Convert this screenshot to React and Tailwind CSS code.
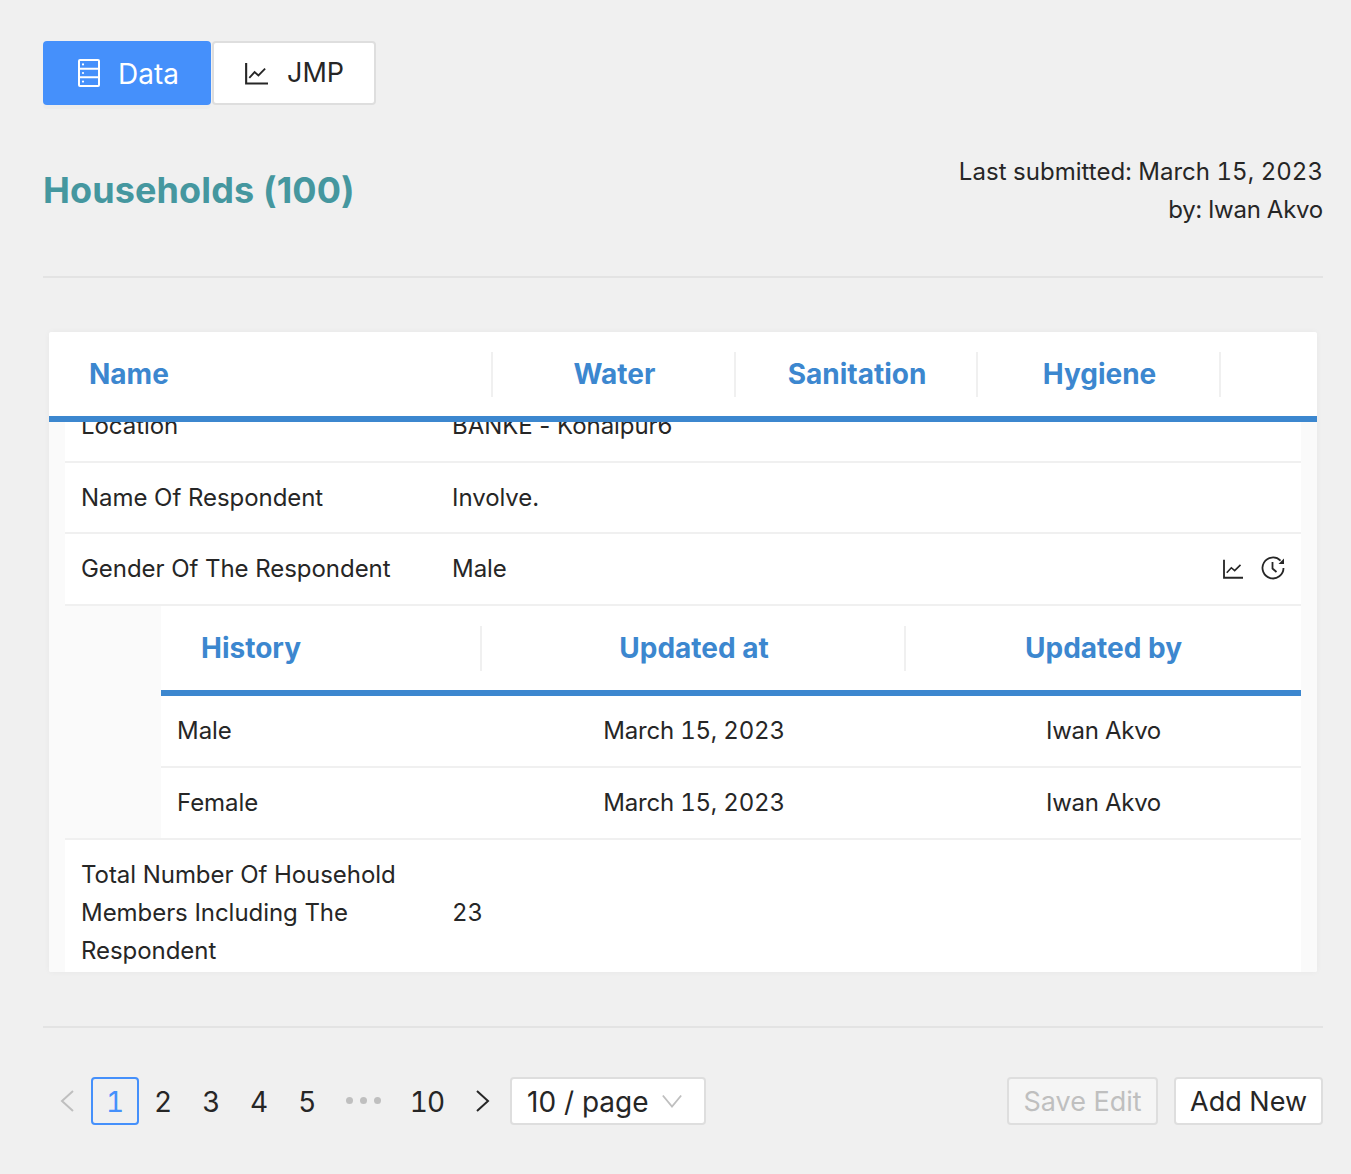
import React from "react";

const ChartIcon = ({ className }) => (
  <svg viewBox="0 0 24 24" fill="none" stroke="currentColor" strokeWidth="2.2" className={className}>
    <path d="M1.2 1v21.5H24" />
    <path d="M4.5 16.5l5.5-6 4 3.5 7-7" strokeWidth="1.9" />
  </svg>
);

const ServerIcon = ({ className }) => (
  <svg viewBox="0 0 22 28" fill="none" stroke="currentColor" strokeWidth="2" className={className}>
    <rect x="1" y="1" width="20" height="26" rx="1" />
    <path d="M1 9.7h20M1 18.3h20" />
    <circle cx="5" cy="5.4" r="1.1" fill="currentColor" stroke="none" />
    <circle cx="5" cy="14" r="1.1" fill="currentColor" stroke="none" />
    <circle cx="5" cy="22.6" r="1.1" fill="currentColor" stroke="none" />
  </svg>
);

const HistoryIcon = ({ className }) => (
  <svg viewBox="0 0 24 24" fill="none" stroke="currentColor" strokeWidth="1.8" className={className}>
    <path d="M22.5 12A10.5 10.5 0 1 1 19.5 4.6" />
    <path d="M23 2.5v5.5h-5.5z" fill="currentColor" stroke="none" />
    <path d="M11.5 6v6.5l4 3.5" />
  </svg>
);

const Cell = ({ label, value, children }) => (
  <div className="flex h-full items-center border-b-2 border-[#f0f0f0] pl-4 pr-4">
    <div className="w-[371px] shrink-0 pr-4">{label}</div>
    <div className="flex-1">{value}</div>
    {children}
  </div>
);

const HeadCell = ({ className, children, divider = true }) => (
  <div className={`relative flex h-full items-center ${className}`}>
    {children}
    {divider && <span className="absolute right-0 top-[20px] h-[45px] w-[2px] bg-[#f0f0f0]" />}
  </div>
);

export default function App() {
  return (
    <div className="h-[1174px] bg-[#f0f0f0] pl-[43px] pr-[28px] pt-[41px] font-['Inter',sans-serif] text-[24px] tracking-normal text-[#262626]">
      <div className="flex h-[64px]">
        <div className="flex w-[168px] items-center justify-center gap-[18px] rounded-[4px] bg-[#4590fb] pl-[3px] text-[28px] text-white shadow-[0_4px_0_rgba(0,0,0,0.015)]">
          <ServerIcon className="h-[28px] w-[22px]" />
          <span className="mt-px">Data</span>
        </div>
        <div className="ml-px flex w-[164px] items-center justify-center gap-[18px] rounded-[4px] border-2 border-[#dedede] bg-white text-[27px]">
          <ChartIcon className="h-[23px] w-[25px]" />
          <span>JMP</span>
        </div>
      </div>

      <div className="mt-[48px] flex h-[125px] items-start justify-between border-b-2 border-[#e3e3e3]">
        <h1 className="mt-[15px] text-[36px] leading-[44px] font-bold tracking-[0.12px] text-[#45979f]">Households (100)</h1>
        <div className="text-right leading-[38px] tabular-nums">
          <div className="tracking-[0.03px]">Last submitted: March 15, 2023</div>
          <div className="tracking-[-0.25px]">by: Iwan Akvo</div>
        </div>
      </div>

      <div className="mx-[6px] mt-[54px] flex h-[640px] flex-col overflow-hidden rounded-[2px] bg-white shadow-[0_0_6px_rgba(0,0,0,0.04)]">
        <div className="flex h-[90px] shrink-0 border-b-[6px] border-[#3c87cf] text-[28px] font-bold text-[#3c87cf]">
          <HeadCell className="w-[444px] pl-[40px]">Name</HeadCell>
          <HeadCell className="w-[243px] justify-center">Water</HeadCell>
          <HeadCell className="w-[242px] justify-center">Sanitation</HeadCell>
          <HeadCell className="w-[243px] justify-center">Hygiene</HeadCell>
        </div>
        <div className="min-h-0 flex-1 overflow-hidden bg-[#fafafa] px-[16px] tracking-[-0.05px]">
          <div className="mt-[-31px] bg-white">
            <div className="h-[72px]">
              <Cell label="Location" value="BANKE - Kohalpur6" />
            </div>
            <div className="h-[71px]">
              <Cell label="Name Of Respondent" value="Involve." />
            </div>
            <div className="h-[72px]">
              <Cell label="Gender Of The Respondent" value="Male">
                <ChartIcon className="mr-[17px] h-[20px] w-[22px]" />
                <HistoryIcon className="mb-[2px] h-[24px] w-[24px]" />
              </Cell>
            </div>
            <div className="flex border-b-2 border-[#f0f0f0]">
              <div className="w-[96px] shrink-0 bg-[#fafafa]" />
              <div className="flex-1">
                <div className="flex h-[90px] border-b-[6px] border-[#3c87cf] text-[28px] font-bold tracking-normal text-[#3c87cf]">
                  <HeadCell className="w-[321px] pl-[40px]">History</HeadCell>
                  <HeadCell className="w-[424px] justify-center">Updated at</HeadCell>
                  <HeadCell className="flex-1 justify-center" divider={false}>Updated by</HeadCell>
                </div>
                <div className="flex h-[72px] items-center border-b-2 border-[#f0f0f0]">
                  <div className="w-[321px] pl-4">Male</div>
                  <div className="w-[424px] text-center tabular-nums tracking-[-0.2px]">March 15, 2023</div>
                  <div className="flex-1 text-center tracking-[-0.3px]">Iwan Akvo</div>
                </div>
                <div className="flex h-[70px] items-center">
                  <div className="w-[321px] pl-4">Female</div>
                  <div className="w-[424px] text-center tabular-nums tracking-[-0.2px]">March 15, 2023</div>
                  <div className="flex-1 text-center tracking-[-0.3px]">Iwan Akvo</div>
                </div>
              </div>
            </div>
            <div className="flex items-center pb-[18px] pl-4 pr-4 pt-[16px] leading-[38px]">
              <div className="w-[371px] shrink-0 pr-4">Total Number Of Household Members Including The Respondent</div>
              <div className="tabular-nums">23</div>
            </div>
          </div>
        </div>
      </div>

      <div className="mt-[54px] flex items-start justify-between border-t-2 border-[#e3e3e3] pt-[49px]">
        <div className="flex h-[48px] items-center pl-[16px] text-[28px]">
          <svg viewBox="0 0 16 24" fill="none" stroke="#bfbfbf" strokeWidth="2" className="mr-[16px] h-[24px] w-[16px]"><path d="M14 2L3 12l11 10" /></svg>
          <div className="flex h-[48px] w-[48px] items-center justify-center rounded-[4px] border-2 border-[#4590fb] pt-[2px] text-[#4590fb] tabular-nums">1</div>
          <div className="w-[48px] pt-[2px] text-center">2</div>
          <div className="w-[48px] pt-[2px] text-center">3</div>
          <div className="w-[48px] pt-[2px] text-center">4</div>
          <div className="w-[48px] pt-[2px] text-center">5</div>
          <div className="mb-[2px] flex w-[64px] justify-center gap-[7px]">
            <span className="h-[7px] w-[7px] rounded-full bg-[#bfbfbf]" />
            <span className="h-[7px] w-[7px] rounded-full bg-[#bfbfbf]" />
            <span className="h-[7px] w-[7px] rounded-full bg-[#bfbfbf]" />
          </div>
          <div className="w-[64px] pt-[2px] text-center tabular-nums tracking-[-1px]">10</div>
          <svg viewBox="0 0 16 24" fill="none" stroke="#262626" strokeWidth="2" className="ml-[16px] mr-[19px] h-[24px] w-[16px]"><path d="M2 2l11 10L2 22" /></svg>
          <div className="flex h-[48px] w-[196px] items-center justify-between rounded-[4px] border-2 border-[#dedede] bg-white pl-[15px] pr-[21px]">
            <span className="pt-[2px]">10 / page</span>
            <svg viewBox="0 0 24 16" fill="none" stroke="#bfbfbf" strokeWidth="2" className="h-[16px] w-[22px]"><path d="M2 2l10 12L22 2" /></svg>
          </div>
        </div>
        <div className="flex h-[48px] gap-[16px] text-[27px]">
          <div className="flex w-[151px] items-center justify-center rounded-[4px] border-2 border-[#dedede] bg-[#f5f5f5] pt-[2px] text-[#bfbfbf]">Save Edit</div>
          <div className="flex w-[149px] items-center justify-center rounded-[4px] border-2 border-[#dedede] bg-white pt-[2px]">Add New</div>
        </div>
      </div>
    </div>
  );
}
